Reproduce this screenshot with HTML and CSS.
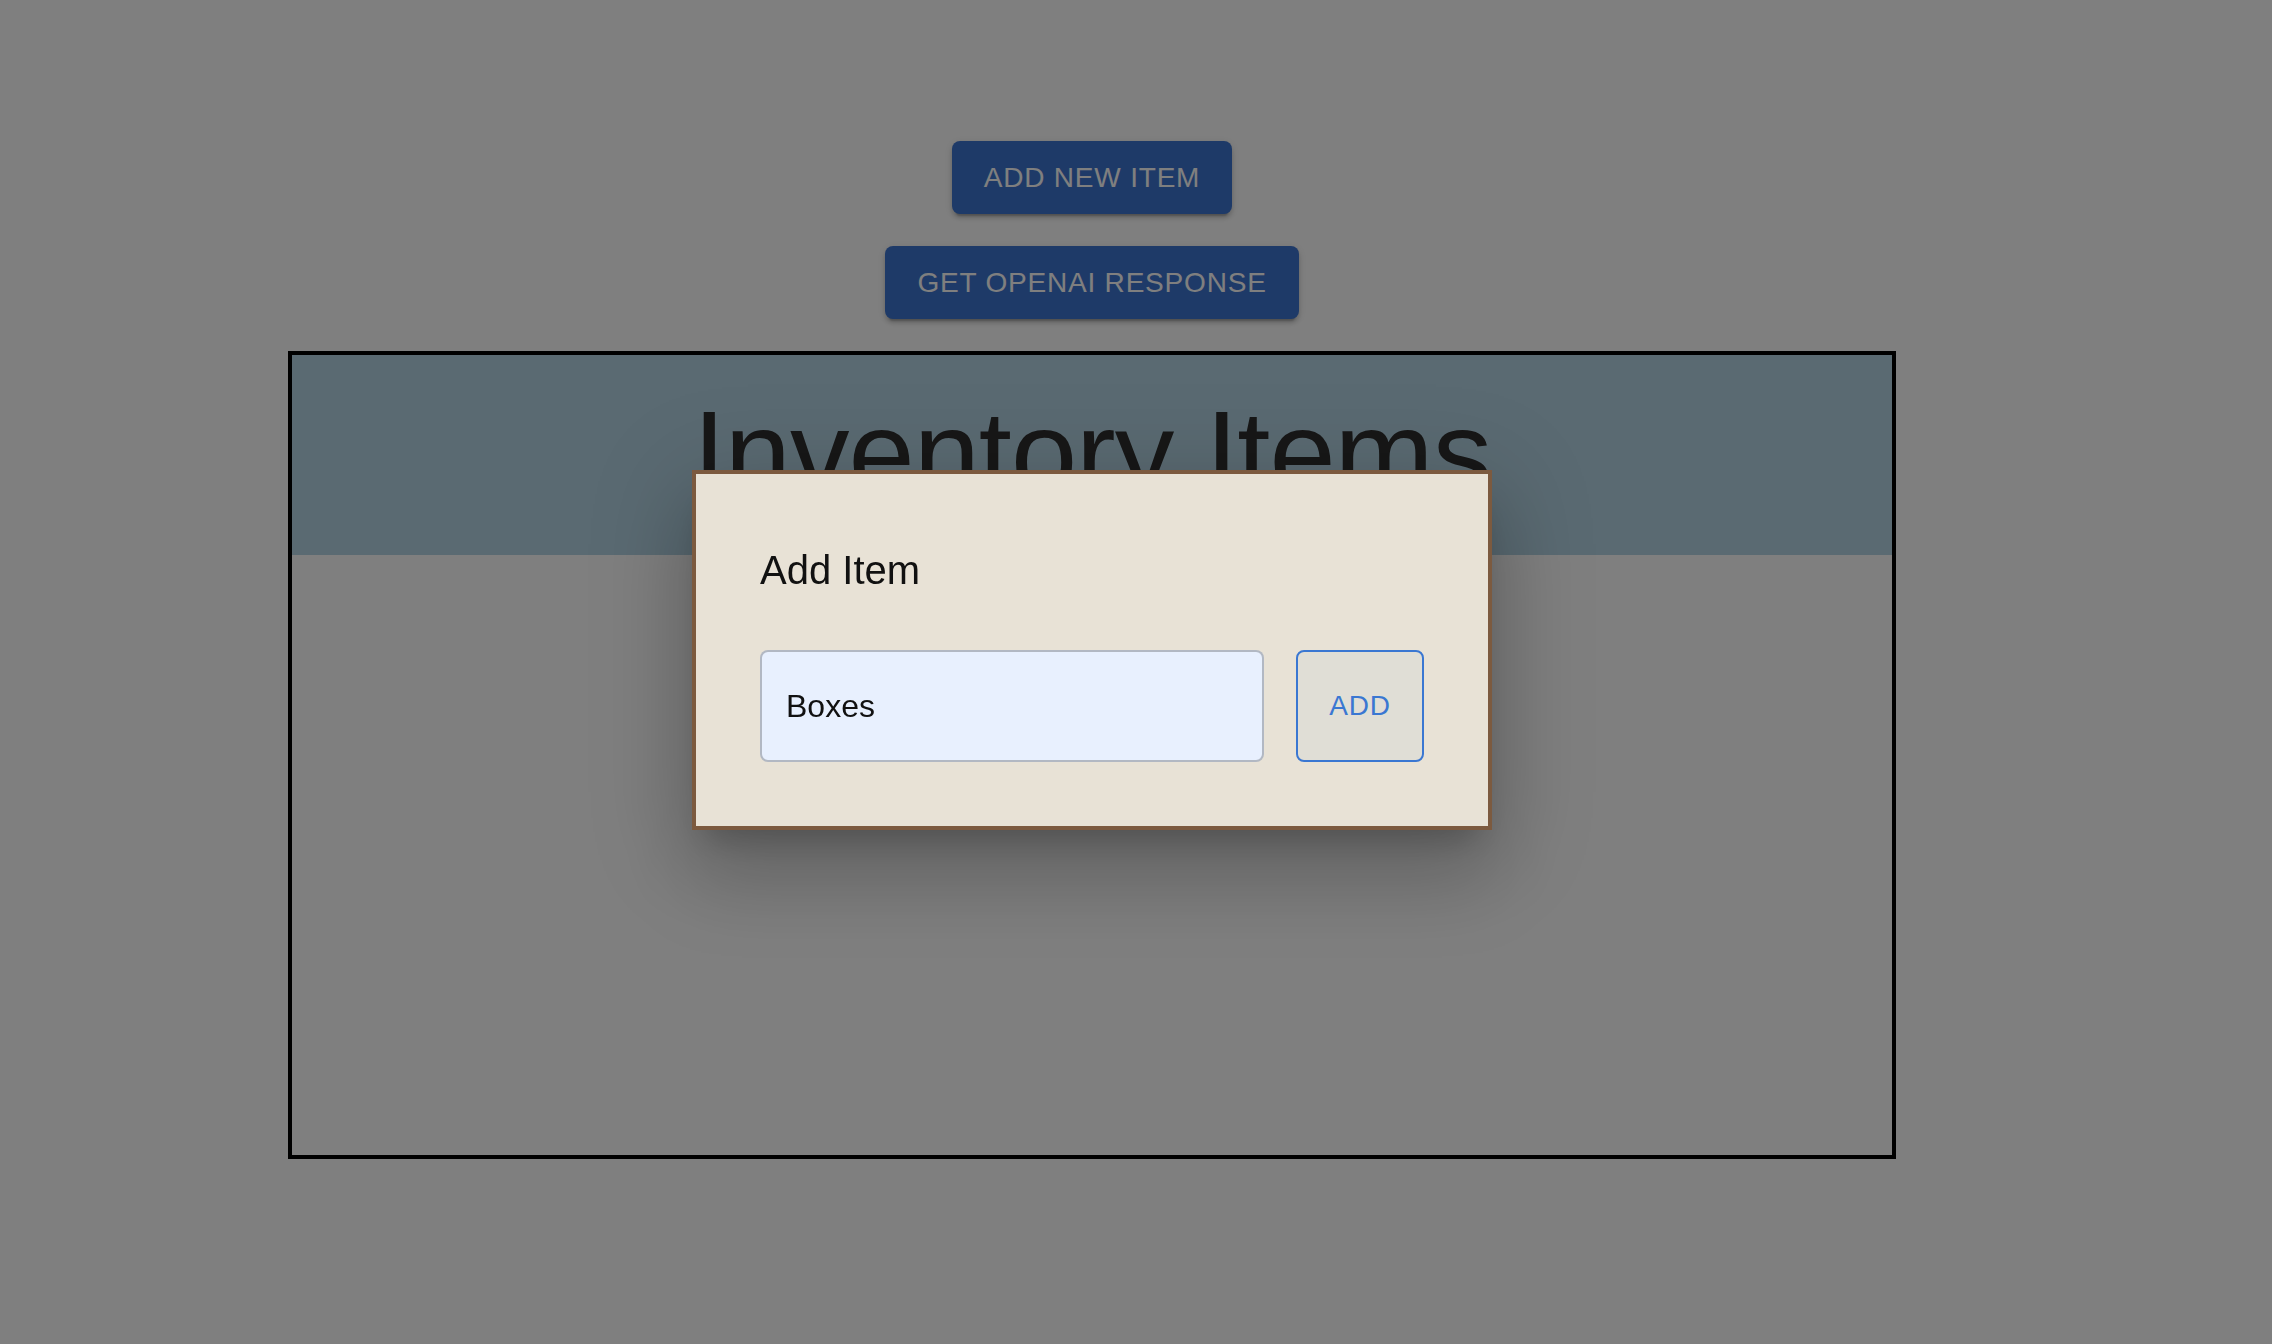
FILE: index.html
```html
<!DOCTYPE html>
<html lang="en">
<head>
<meta charset="utf-8">
<title>Inventory</title>
<link rel="stylesheet" href="styles.css">
</head>
<body>
<div class="app">
  <button class="btn-contained">Add New Item</button>
  <button class="btn-contained">Get OpenAI Response</button>
  <div class="inventory">
    <div class="inventory-header">
      <h2 class="inventory-title">Inventory Items</h2>
    </div>
    <div class="inventory-list"></div>
  </div>

  <div class="backdrop"></div>
  <div class="modal">
    <h6 class="modal-title">Add Item</h6>
    <div class="modal-row">
      <div class="field"><input class="field-input" type="text" value="Boxes"></div>
      <button class="btn-outlined">Add</button>
    </div>
  </div>
</div>
</body>
</html>
```

FILE: styles.css
```css
* { box-sizing: border-box; }

html, body {
  margin: 0;
  padding: 0;
  background: #ffffff;
  font-family: "Liberation Sans", Arial, Helvetica, sans-serif;
}

.app {
  position: relative;
  width: 2184px;
  height: 1300px;
  display: flex;
  flex-direction: column;
  align-items: center;
  justify-content: center;
  gap: 32px;
}

.btn-contained {
  font-family: "Liberation Sans", Arial, Helvetica, sans-serif;
  font-size: 28px;
  font-weight: 400;
  line-height: 49px;
  letter-spacing: 0.8px;
  text-transform: uppercase;
  color: #ffffff;
  background: #3c74d0;
  border: none;
  border-radius: 8px;
  padding: 12px 32px;
  box-shadow: 0 6px 2px -4px rgba(0,0,0,0.2), 0 4px 4px 0 rgba(0,0,0,0.14), 0 2px 10px 0 rgba(0,0,0,0.12);
  cursor: pointer;
}

.inventory {
  width: 1608px;
  height: 808px;
  border: 4px solid #000000;
  display: flex;
  flex-direction: column;
}

.inventory-header {
  height: 200px;
  flex: none;
  background: #b4d4e4;
  display: flex;
  align-items: center;
  justify-content: center;
  padding-bottom: 4px;
}

.inventory-title {
  margin: 0;
  font-size: 119px;
  font-weight: 300;
  line-height: 1.2;
  letter-spacing: -1px;
  color: #2e2e2e;
}

.inventory-list {
  flex: 1;
}

.backdrop {
  position: fixed;
  inset: 0;
  background: rgba(0, 0, 0, 0.5);
}

.modal {
  position: absolute;
  top: 50%;
  left: 50%;
  transform: translate(-50%, -50%);
  width: 800px;
  background: #e8e2d6;
  border: 4px solid #7c5a3f;
  padding: 64px;
  display: flex;
  flex-direction: column;
  gap: 48px;
  box-shadow: 0 22px 30px -14px rgba(0,0,0,0.2), 0 48px 76px 6px rgba(0,0,0,0.14), 0 18px 92px 16px rgba(0,0,0,0.12);
}

.modal-title {
  margin: 0;
  font-size: 40px;
  font-weight: 400;
  line-height: 64px;
  color: #111111;
}

.modal-row {
  display: flex;
  gap: 32px;
  height: 112px;
}

.field {
  flex: 1;
  display: flex;
  align-items: center;
  background: #e8f0fe;
  border: 2px solid rgba(0, 0, 0, 0.23);
  border-radius: 8px;
}

.field-input {
  width: 100%;
  border: none;
  outline: none;
  background: transparent;
  font-family: "Liberation Sans", Arial, Helvetica, sans-serif;
  font-size: 32px;
  color: #111111;
  padding: 0 24px;
}

.btn-outlined {
  min-width: 128px;
  padding: 0 30px;
  font-family: "Liberation Sans", Arial, Helvetica, sans-serif;
  font-size: 28px;
  font-weight: 400;
  letter-spacing: 0.8px;
  text-transform: uppercase;
  color: #3a77d2;
  background: #e0ded6;
  border: 2px solid #3a77d2;
  border-radius: 8px;
  cursor: pointer;
}
```
